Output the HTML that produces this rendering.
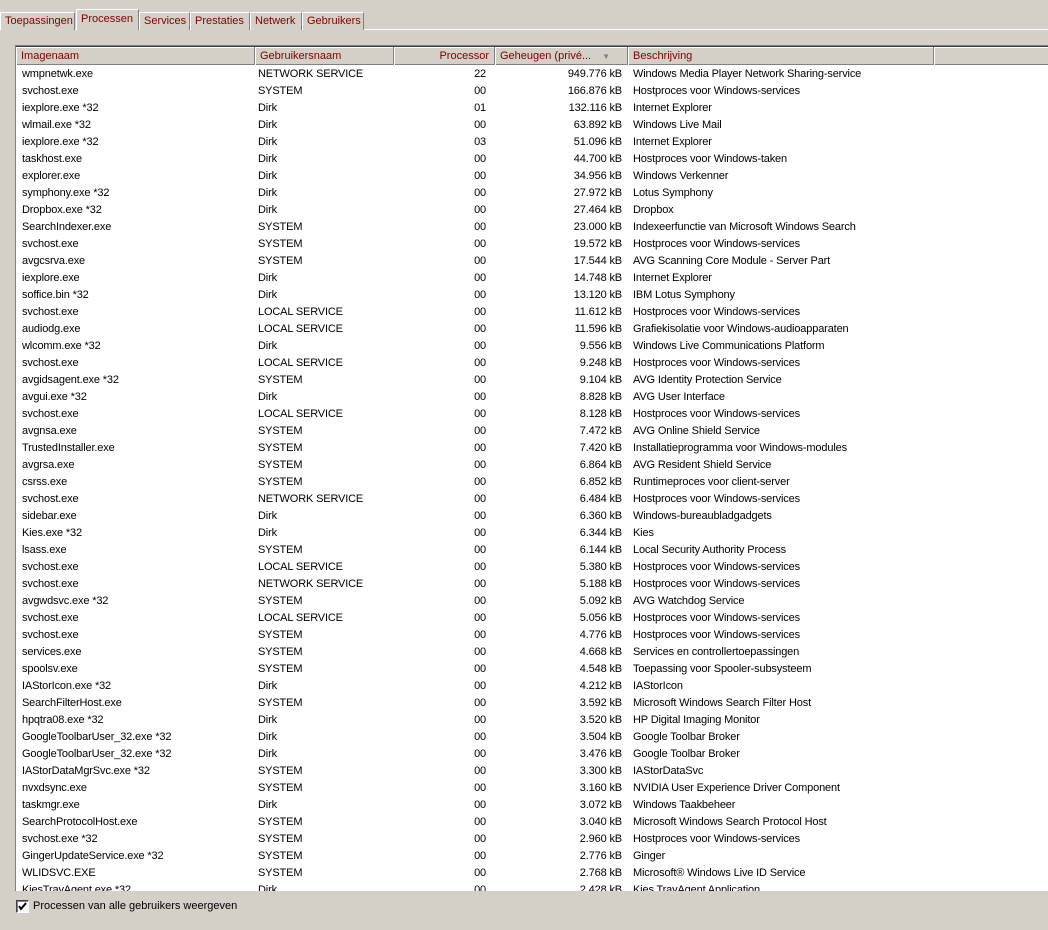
<!DOCTYPE html>
<html><head><meta charset="utf-8"><style>
*{margin:0;padding:0;box-sizing:border-box}
body{width:1048px;height:930px;background:#d4d0c8;font-family:Tahoma,"Liberation Sans",sans-serif;font-size:11px;color:#000;position:relative;overflow:hidden}
.tab{position:absolute;top:12px;height:18px;border:1px solid #fff;border-right:1px solid #808080;border-bottom:none;color:#800000;padding:1px 4px 0 4px;font-size:11px;line-height:15px;background:#d4d0c8}
.tab.sel{top:9px;height:21px;border-bottom:none;z-index:2;line-height:17px;color:#800000}
.tabline{position:absolute;top:29px;left:0;width:1048px;height:1px;background:#fff}
.list{position:absolute;left:15px;top:45px;width:1040px;height:846px;background:#fff;border-top:1px solid #808080;border-left:1px solid #808080;overflow:hidden}
.list:before{content:"";position:absolute;left:0;top:0;width:100%;height:1px;background:#404040}
.hdr{position:absolute;top:1px;left:0;height:18px;width:100%;background:#d4d0c8;border-bottom:1px solid #808080}
.hc{position:absolute;top:0;height:18px;border-right:1px solid #808080;box-shadow:inset 1px 1px 0 #fff;color:#800000;line-height:18px;padding:0 5px;white-space:nowrap;overflow:hidden}
.row{position:absolute;left:0;height:17px;width:100%;line-height:17px;white-space:nowrap;letter-spacing:-0.15px}
.row span{position:absolute;top:0}
.c1{left:6px}.c2{left:242px}.c3{left:0;width:470px;text-align:right}.c4{left:0;width:606px;text-align:right}.c5{left:617px}
.chk{position:absolute;left:16px;top:900px;width:13px;height:13px;background:#fff;border:1px solid #404040;border-right-color:#fff;border-bottom-color:#fff;box-shadow:inset 1px 1px 0 #808080}
.lbl{position:absolute;left:33px;top:899px;line-height:14px}
</style></head><body>
<div class="tabline"></div>
<div class="tab" style="left:0;width:75px">Toepassingen</div>
<div class="tab sel" style="left:76px;width:63px">Processen</div>
<div class="tab" style="left:139px;width:51px">Services</div>
<div class="tab" style="left:190px;width:60px">Prestaties</div>
<div class="tab" style="left:250px;width:52px">Netwerk</div>
<div class="tab" style="left:302px;width:62px">Gebruikers</div>
<div class="list">
<div class="hdr">
<div class="hc" style="left:0;width:239px">Imagenaam</div>
<div class="hc" style="left:239px;width:139px">Gebruikersnaam</div>
<div class="hc" style="left:378px;width:101px;text-align:right">Processor</div>
<div class="hc" style="left:479px;width:133px">Geheugen (privé... <span style="color:#808080;font-size:8px;margin-left:8px">▼</span></div>
<div class="hc" style="left:612px;width:306px">Beschrijving</div>
<div class="hc" style="left:918px;width:130px"></div>
</div>
<div id="rows"></div>
</div>
<div class="chk"><svg width="11" height="11" style="position:absolute;left:0;top:0"><path d="M2 5 L4 8 L9 2" stroke="#000" stroke-width="2" fill="none"/></svg></div>
<div class="lbl">Processen van alle gebruikers weergeven</div>
<script>
var d=[
["wmpnetwk.exe","NETWORK SERVICE","22","949.776 kB","Windows Media Player Network Sharing-service"],
["svchost.exe","SYSTEM","00","166.876 kB","Hostproces voor Windows-services"],
["iexplore.exe *32","Dirk","01","132.116 kB","Internet Explorer"],
["wlmail.exe *32","Dirk","00","63.892 kB","Windows Live Mail"],
["iexplore.exe *32","Dirk","03","51.096 kB","Internet Explorer"],
["taskhost.exe","Dirk","00","44.700 kB","Hostproces voor Windows-taken"],
["explorer.exe","Dirk","00","34.956 kB","Windows Verkenner"],
["symphony.exe *32","Dirk","00","27.972 kB","Lotus Symphony"],
["Dropbox.exe *32","Dirk","00","27.464 kB","Dropbox"],
["SearchIndexer.exe","SYSTEM","00","23.000 kB","Indexeerfunctie van Microsoft Windows Search"],
["svchost.exe","SYSTEM","00","19.572 kB","Hostproces voor Windows-services"],
["avgcsrva.exe","SYSTEM","00","17.544 kB","AVG Scanning Core Module - Server Part"],
["iexplore.exe","Dirk","00","14.748 kB","Internet Explorer"],
["soffice.bin *32","Dirk","00","13.120 kB","IBM Lotus Symphony"],
["svchost.exe","LOCAL SERVICE","00","11.612 kB","Hostproces voor Windows-services"],
["audiodg.exe","LOCAL SERVICE","00","11.596 kB","Grafiekisolatie voor Windows-audioapparaten"],
["wlcomm.exe *32","Dirk","00","9.556 kB","Windows Live Communications Platform"],
["svchost.exe","LOCAL SERVICE","00","9.248 kB","Hostproces voor Windows-services"],
["avgidsagent.exe *32","SYSTEM","00","9.104 kB","AVG Identity Protection Service"],
["avgui.exe *32","Dirk","00","8.828 kB","AVG User Interface"],
["svchost.exe","LOCAL SERVICE","00","8.128 kB","Hostproces voor Windows-services"],
["avgnsa.exe","SYSTEM","00","7.472 kB","AVG Online Shield Service"],
["TrustedInstaller.exe","SYSTEM","00","7.420 kB","Installatieprogramma voor Windows-modules"],
["avgrsa.exe","SYSTEM","00","6.864 kB","AVG Resident Shield Service"],
["csrss.exe","SYSTEM","00","6.852 kB","Runtimeproces voor client-server"],
["svchost.exe","NETWORK SERVICE","00","6.484 kB","Hostproces voor Windows-services"],
["sidebar.exe","Dirk","00","6.360 kB","Windows-bureaubladgadgets"],
["Kies.exe *32","Dirk","00","6.344 kB","Kies"],
["lsass.exe","SYSTEM","00","6.144 kB","Local Security Authority Process"],
["svchost.exe","LOCAL SERVICE","00","5.380 kB","Hostproces voor Windows-services"],
["svchost.exe","NETWORK SERVICE","00","5.188 kB","Hostproces voor Windows-services"],
["avgwdsvc.exe *32","SYSTEM","00","5.092 kB","AVG Watchdog Service"],
["svchost.exe","LOCAL SERVICE","00","5.056 kB","Hostproces voor Windows-services"],
["svchost.exe","SYSTEM","00","4.776 kB","Hostproces voor Windows-services"],
["services.exe","SYSTEM","00","4.668 kB","Services en controllertoepassingen"],
["spoolsv.exe","SYSTEM","00","4.548 kB","Toepassing voor Spooler-subsysteem"],
["IAStorIcon.exe *32","Dirk","00","4.212 kB","IAStorIcon"],
["SearchFilterHost.exe","SYSTEM","00","3.592 kB","Microsoft Windows Search Filter Host"],
["hpqtra08.exe *32","Dirk","00","3.520 kB","HP Digital Imaging Monitor"],
["GoogleToolbarUser_32.exe *32","Dirk","00","3.504 kB","Google Toolbar Broker"],
["GoogleToolbarUser_32.exe *32","Dirk","00","3.476 kB","Google Toolbar Broker"],
["IAStorDataMgrSvc.exe *32","SYSTEM","00","3.300 kB","IAStorDataSvc"],
["nvxdsync.exe","SYSTEM","00","3.160 kB","NVIDIA User Experience Driver Component"],
["taskmgr.exe","Dirk","00","3.072 kB","Windows Taakbeheer"],
["SearchProtocolHost.exe","SYSTEM","00","3.040 kB","Microsoft Windows Search Protocol Host"],
["svchost.exe *32","SYSTEM","00","2.960 kB","Hostproces voor Windows-services"],
["GingerUpdateService.exe *32","SYSTEM","00","2.776 kB","Ginger"],
["WLIDSVC.EXE","SYSTEM","00","2.768 kB","Microsoft® Windows Live ID Service"],
["KiesTrayAgent.exe *32","Dirk","00","2.428 kB","Kies TrayAgent Application"]];
var h="";
d.forEach(function(r,i){h+='<div class="row" style="top:'+(20+i*17)+'px"><span class="c1">'+r[0]+'</span><span class="c2">'+r[1]+'</span><span class="c3">'+r[2]+'</span><span class="c4">'+r[3]+'</span><span class="c5">'+r[4]+'</span></div>';});
document.getElementById("rows").innerHTML=h;
</script>
</body></html>
